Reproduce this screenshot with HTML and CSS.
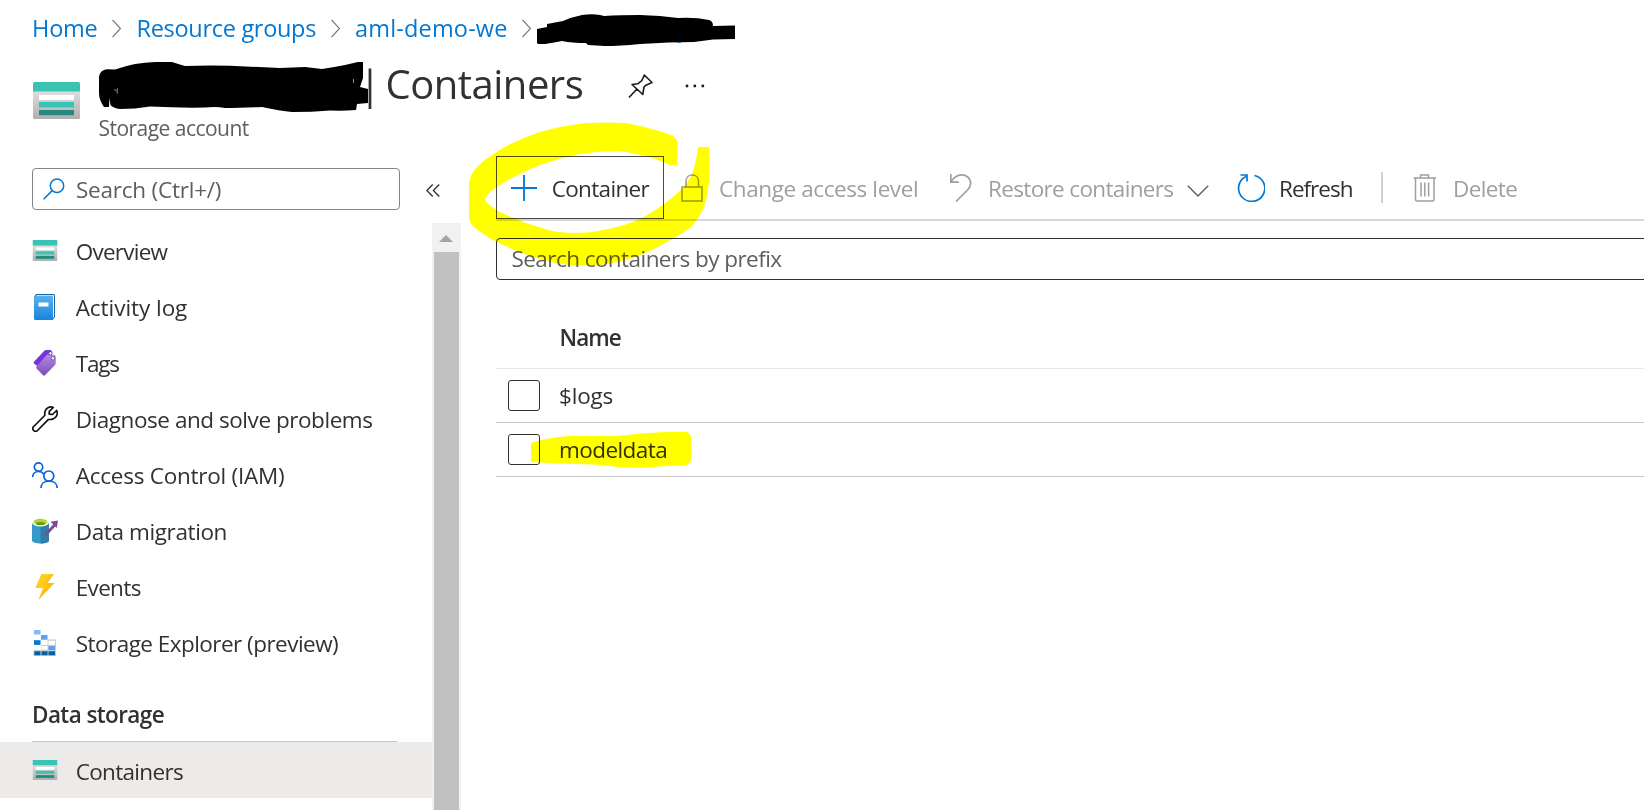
FILE: index.html
```html
<!DOCTYPE html>
<html lang="en">
<head>
<meta charset="utf-8">
<title>Containers</title>
<link rel="stylesheet" href="styles.css">
</head>
<body>
<svg class="defs" width="0" height="0" aria-hidden="true">
  <defs>
    <linearGradient id="grey" x1="0" y1="0" x2="0" y2="1"><stop offset="0" stop-color="#e6e6e6"/><stop offset="1" stop-color="#b0b0b0"/></linearGradient>
    <linearGradient id="blue" x1="0" y1="0" x2="0" y2="1"><stop offset="0" stop-color="#5ab0ef"/><stop offset="1" stop-color="#1785db"/></linearGradient>
    <linearGradient id="violet" x1="0" y1="0" x2="0" y2="1"><stop offset="0" stop-color="#b98ae6"/><stop offset="1" stop-color="#7a4bb8"/></linearGradient>
    <linearGradient id="bolt" x1="0" y1="0" x2="1" y2="1"><stop offset="0" stop-color="#fdd21a"/><stop offset="1" stop-color="#fbb010"/></linearGradient>
  </defs>
  <symbol id="storage" viewBox="0 0 47 37" preserveAspectRatio="none">
    <rect y="4" width="47" height="33" rx="1.5" fill="url(#grey)"/>
    <path d="M0 9.500V1.500Q0 0 1.500 0H45.500Q47 0 47 1.500V9.500Z" fill="#39c3b3"/>
    <rect x="6" y="13" width="35" height="5" fill="#fff"/>
    <rect x="6" y="20" width="35" height="5.500" fill="#39c3b3"/>
    <rect x="6" y="28" width="35" height="5.200" fill="#27897e"/>
  </symbol>
</svg>

<header class="header">
  <nav class="crumbs">
    <a class="t-home">Home</a>
    <svg width="9" height="19" viewBox="0 0 9 19"><path d="M.5 .8 8.500 9.500.5 18.200" fill="none" stroke="#767676" stroke-width="1.200"/></svg>
    <a class="t-groups">Resource groups</a>
    <svg width="9" height="19" viewBox="0 0 9 19"><path d="M.5 .8 8.500 9.500.5 18.200" fill="none" stroke="#767676" stroke-width="1.200"/></svg>
    <a class="t-aml">aml-demo-we</a>
    <svg width="9" height="19" viewBox="0 0 9 19"><path d="M.5 .8 8.500 9.500.5 18.200" fill="none" stroke="#767676" stroke-width="1.200"/></svg>
  </nav>
  <div class="titlebar">
    <svg class="logo" width="47" height="37"><use href="#storage"/></svg>
    <div>
      <div class="title-row">
        <h1><span class="bar">|</span>Containers</h1>
        <svg class="pin" width="26" height="26" viewBox="0 0 26 26" fill="none" stroke="#1b1a19" stroke-width="1.600" stroke-linejoin="round"><path d="M1 24.500 8.700 16.200M16.300 2 24 9.500 17.800 12.300 16 14 14.800 21.500 4 11.500 10 10.700 13.900 7.500Z"/></svg>
        <svg class="dots" width="20" height="4" viewBox="0 0 20 4" fill="#1b1a19"><circle cx="2" cy="2" r="1.450"/><circle cx="9.800" cy="2" r="1.450"/><circle cx="17.800" cy="2" r="1.450"/></svg>
      </div>
      <div class="subtitle">Storage account</div>
    </div>
  </div>
</header>

<div class="page">
  <aside class="side">
    <div class="side-top">
      <div class="search">
        <svg width="22" height="22" viewBox="0 0 22 22" fill="none" stroke="#0078d4" stroke-width="1.500"><circle cx="14" cy="7.800" r="6.700"/><path d="M9.200 12.600.6 21.200"/></svg>
        <span class="t-search">Search (Ctrl+/)</span>
      </div>
      <svg class="collapse" width="14" height="13" viewBox="0 0 14 13" fill="none" stroke="#323130" stroke-width="1.300"><path d="M6.700.5.9 6.500 6.700 12.500M13.200.5 7.400 6.500 13.200 12.500"/></svg>
    </div>
    <div class="side-body">
      <div class="menu">
        <div class="item"><svg width="26" height="26" viewBox="0 0 26 26"><use href="#storage" x=".5" y="2" width="25" height="21"/></svg><span class="t-overview">Overview</span></div>
        <div class="item"><svg width="26" height="26" viewBox="0 0 26 26"><path d="M4 0H21.500Q23 0 23 1.500V23L20.500 26H5L2 3Z" fill="#1767a8"/><path d="M4.500 1.200H22V23L20.500 24V3H3.500Z" fill="#fff"/><path d="M2 2.800Q2 2 3 2H20.500Q21 2 21 2.800V25Q21 26 20 26H3.500Q2 26 2 24.500Z" fill="url(#blue)"/><rect x="6.500" y="8.500" width="10" height="4" fill="#fff"/></svg><span class="t-activity">Activity log</span></div>
        <div class="item"><svg width="26" height="26" viewBox="0 0 26 26"><path d="M12.500 .5Q13 0 14 0H18.500Q20 .3 20 2V7L6 16.500 2 13.500Q1.300 12.500 2 11.700Z" fill="#7435dc"/><path d="M15 4.800Q15.500 4.300 16.500 4.300L22.300 5Q23.800 5.300 23.800 6.700L23.700 13.500Q23.500 14.300 23 15L13 25.300Q12 26.200 11 25.300L4.500 18.500Q3.700 17.500 4.500 16.500Z" fill="url(#violet)"/><circle cx="18.400" cy="3.300" r="1.700" fill="#fff" stroke="#472089" stroke-width=".8"/><circle cx="21" cy="8.300" r="1.700" fill="#fff" stroke="#6b3ab0" stroke-width=".8"/></svg><span class="t-tags">Tags</span></div>
        <div class="item"><svg width="26" height="26" viewBox="0 0 26 26" fill="none" stroke="#111" stroke-width="1.700" stroke-linejoin="round"><path d="M21.300 1.500C17.500-.2 13.500 2.200 12.900 5.800 12.700 7.300 12.900 8.700 12.700 9.500L1.700 20.500C-.9 23.300 2.800 27 5.500 24.500L16.200 13.600C17.300 13.300 19 13.800 20.700 13.100 24.500 11.900 26.300 7.800 24.600 4.500L20.500 8.500 17.200 8.200 17.300 5.400Z"/></svg><span class="t-diagnose">Diagnose and solve problems</span></div>
        <div class="item"><svg width="26" height="26" viewBox="0 0 26 26" fill="none" stroke="#0f62dc" stroke-width="1.700"><circle cx="6.500" cy="5" r="4.200"/><circle cx="16.800" cy="14" r="5"/><path d="M.7 15C.7 11.500 3.500 9.500 6.500 9.500 8.700 9.500 10.800 10.500 11.800 12.300M9 26C9 21.500 12.500 19 17 19 21.500 19 25.200 21.500 25.200 26"/></svg><span class="t-access">Access Control (IAM)</span></div>
        <div class="item"><svg width="26" height="26" viewBox="0 0 26 26"><path d="M0 4V22.500C0 26.500 17 26.500 17 22.500V4Z" fill="#3999c6"/><path d="M8.500 4V25.500C13 25.500 17 24.500 17 22.500V4Z" fill="#2f7ea8"/><ellipse cx="8.500" cy="4.500" rx="8.500" ry="4" fill="#fff"/><ellipse cx="8.500" cy="4" rx="7" ry="3.200" fill="#b4d331"/><ellipse cx="8.500" cy="5.500" rx="4.500" ry="1.600" fill="#5ea00b"/><path d="M14 16.500 23 6.500" stroke="#804998" stroke-width="2.800"/><path d="M18.500 3.800 26 2.500 24.800 10Z" fill="#804998"/></svg><span class="t-migration">Data migration</span></div>
        <div class="item"><svg width="26" height="26" viewBox="0 0 26 26"><path d="M9.500 0H22L15.500 9H22.500L6.500 26 11 14H3.500Z" fill="url(#bolt)"/><path d="M9.500 0H18L10.500 11H15L6.500 26 11 14H3.500Z" fill="#fdd31c" opacity=".65"/></svg><span class="t-events">Events</span></div>
        <div class="item"><svg width="26" height="26" viewBox="0 0 26 26"><path d="M15.500 9.500H24V26H1.500V20H9V15H15.500Z" fill="#c8cdd2"/><rect x="2" y="0" width="6.500" height="4.500" fill="#83b9f9"/><rect x="9" y="5" width="6.500" height="4.700" fill="#5ea0ef"/><rect x="2" y="10.200" width="6.500" height="4.700" fill="#0078d4"/><path d="M9.500 10.500H15.200V15H9.500ZM16.500 10.800H23V14.700H16.500ZM2.500 16H8.500V19.800H2.500ZM9.500 16H15.500V19.800H9.500Z" fill="#fff"/><rect x="16.500" y="16" width="6.500" height="4" fill="#5ea0ef"/><path d="M2.300 21.200H8.500V25.200H2.300ZM9.500 21.200H15.600V25.200H9.500ZM16.500 21.200H23V25.200H16.500Z" fill="#0560a6"/></svg><span class="t-explorer">Storage Explorer (preview)</span></div>
        <h2 class="group"><span class="t-data">Data storage</span></h2>
        <div class="item selected"><svg width="26" height="26" viewBox="0 0 26 26"><use href="#storage" x=".5" y="3" width="25" height="20"/></svg><span class="t-containers">Containers</span></div>
      </div>
      <div class="scroll">
        <svg width="14" height="7" viewBox="0 0 14 7"><path d="M7 0 14 7H0Z" fill="#a3a3a3"/></svg>
        <div class="thumb"></div>
      </div>
    </div>
  </aside>

  <main class="main">
    <div class="toolbar">
      <div class="button">
        <svg width="26" height="26" viewBox="0 0 26 26" stroke="#0078d4" stroke-width="1.800"><path d="M13 0V26M0 13H26"/></svg>
        <span class="t-container">Container</span>
      </div>
      <svg class="lock" width="22" height="28" viewBox="0 0 22 28" fill="none" stroke="#a19f9d" stroke-width="1.600"><rect x="1" y="13" width="20" height="14"/><path d="M5 13V7C5 -1 17.500 -1 17.500 7V13"/></svg>
      <span class="label muted t-change">Change access level</span>
      <svg width="22" height="28" viewBox="0 0 22 28" fill="none" stroke="#a19f9d" stroke-width="1.700"><path d="M.8 0V8.200H8.800M1 8C4 3 7.500 .9 11.500 .9 19.500 .9 23.500 9.500 18 15.500L6 27.500"/></svg>
      <span class="label muted t-restore">Restore containers</span>
      <svg class="chevron" width="22" height="12" viewBox="0 0 22 12" fill="none" stroke="#605e5c" stroke-width="1.400"><path d="M.8.700 11 11 21.200.700"/></svg>
      <svg width="28" height="28" viewBox="0 0 28 28" fill="none" stroke="#0078d4" stroke-width="1.700"><path d="M9 2.500A13.100 13.100 0 1 0 17.500 1.500M3.500 1H10V7.500" /></svg>
      <span class="label t-refresh">Refresh</span>
      <span class="divider"></span>
      <svg width="24" height="28" viewBox="0 0 24 28" fill="none" stroke="#a19f9d" stroke-width="1.500"><path d="M.5 4H23M7.500 4V1H15.500V4M2.500 4V25.500Q2.500 27 4 27H19.500Q21 27 21 25.500V4M8 8.500V22.500M11.800 8.500V22.500M15.600 8.500V22.500"/></svg>
      <span class="label muted t-delete">Delete</span>
    </div>
    <div class="filter"><span class="t-filter">Search containers by prefix</span></div>
    <div class="table">
      <div class="row head"><span class="t-name">Name</span></div>
      <div class="row"><i class="box"></i><span class="t-logs">$logs</span></div>
      <div class="row"><i class="box"></i><span class="t-model">modeldata</span></div>
    </div>
  </main>
</div>

<!-- Highlighter strokes -->
<svg class="marks highlight" width="1644" height="810" viewBox="0 0 1644 810" fill="#ff0">
  <path d="M677 165V142Q677 138 671 135 655 129 627 123 606 122 586 123 560 126 540 132 515 140 495 153 485 159 478 166 469 175 469 185V218Q470 224 474 227 485 236 495 241 515 251 530 256 550 263 570 265H600Q620 262 635 257 652 251 667 242 680 235 690 228 698 220 704 207 708 195 709 183V147H698Q697 156 694 168 692 177 684 187 665 206 640 219 625 226 603 230 590 233 575 233 557 233 545 229 520 222 498 211 486 203 485 200 486 193 505 182 520 173 540 165 560 158 580 154 600 151 620 151 640 154 655 159 664 162 670 165Z"/>
  <path d="M531 443Q545 438 568 436H617Q640 433 665 432H686Q691 433 691 438V460Q690 465 684 465.500 665 465.500 640 468 620 468 600 465 587 464 570 464L531 462Z"/>
</svg>
<!-- Redaction strokes -->
<svg class="marks" width="1644" height="810" viewBox="0 0 1644 810">
  <path d="M537 29 547 27V24L563 21Q572 17 582 15 592 13.500 600 15L604 16Q620 15 640 15L660 16 678 18Q695 17 709 20 713 21 713 26L735 25.500V39L713 39.500 694 42Q670 42 640 44 620 46 605 46L588 45 586 43Q572 43 562 41 552 43 545 44H538L537 43Z"/>
  <path d="M99 77Q100 70 107 69.300L115 69.500Q125 66 135 64 145 62.500 155 62H172Q178 64 185 66 205 65 230 65.700L280 68 305 67 322 69Q335 67 345 65L358 62H363V78L360 87 368 89V103L357 104 356 110Q343 111 330 110.500 312 112 292 112 280 111 262 107 240 108 225 108 217 106.500 205 107.500 180 108 150 106.500 135 109 120 109 113 108 110.500 105L109.500 98 109 107H104Q99 100 99 93Z"/>
  <path d="M113 89H117V93Z" fill="#41454b"/><path d="M117 88H118V94H117Z" fill="#246eb5"/><path d="M353 79H354V83H353Z" fill="#888"/>
  <path d="M677 42.300H681" stroke="#0b5a9c"/>
</svg>
</body>
</html>
```
FILE: styles.css
```css
* { box-sizing: border-box; }
body {
  margin: 0;
  width: 1644px;
  height: 810px;
  overflow: hidden;
  position: relative;
  background: #fff;
  color: #323130;
  font: 22.5px/32px "Open Sans", "Noto Sans", sans-serif;
  white-space: nowrap;
}
svg { display: block; flex: none; }
h1, h2 { margin: 0; font: inherit; }
.defs { position: absolute; }

/* Header */
.header { height: 168px; }
.crumbs {
  display: grid;
  grid-template-columns: 80px 24.500px 194.500px 24px 167px 9px;
  align-items: center;
  height: 56px;
  padding-left: 32px;
  font-size: 23.500px;
  color: #0078d4;
}
.titlebar { display: flex; padding-left: 33px; }
.logo { margin: 26px 0 0; }
.title-row { display: flex; align-items: center; height: 60px; margin-top: -4px; }
h1 { width: 548px; padding: 4px 0 0 279px; font-size: 40px; line-height: 54px; letter-spacing: -.5px; }
.bar { display: inline-block; width: 26.500px; }
.pin { margin-top: 8px; }
.dots { margin: 7px 0 0 31px; }
.subtitle { padding-left: 18.500px; font-size: 21px; letter-spacing: -.53px; color: #605e5c; }

/* Columns */
.page { display: flex; height: 642px; }
.side { width: 461px; flex: none; }
.side-top { display: flex; align-items: center; height: 42px; padding-left: 32px; }
.search {
  display: flex;
  align-items: center;
  width: 368px;
  height: 42px;
  padding-left: 10px;
  border: 1px solid #858585;
  border-radius: 4px;
  color: #605e5c;
}
.search span { margin: 1px 0 0 11px; }
.collapse { margin-left: 26px; margin-top: 2px; }
.side-body { display: flex; height: 587px; margin-top: 13px; }
.menu { width: 432px; }
.item { display: flex; align-items: center; height: 56px; padding-left: 32px; }
.item span { margin: 2px 0 0 17.700px; }
.selected { background: #edebe9; }
.selected span { margin-top: 4px; }
.group {
  height: 71px;
  width: 365px;
  margin-left: 32px;
  padding-top: 28px;
  border-bottom: 1px solid #c8c6c4;
  font-weight: 600;
}
.scroll { width: 29px; padding: 12px 2px 0; background: #f1f1f1; }
.scroll svg { margin: 0 auto 10px 5px; }
.thumb { width: 25px; height: 560px; background: #c1c1c1; }

/* Content */
.main { width: 1148px; margin: -12px 0 0 35px; flex: none; overflow: hidden; }
.toolbar {
  display: grid;
  grid-template-columns: 168px 55px 231px 38px 199px 50px 42px 102px 32px 40px 99px;
  align-items: center;
  height: 65px;
  border-bottom: 2px solid #d6d6d6;
}
.button {
  display: flex;
  align-items: center;
  height: 63px;
  padding-left: 14px;
  border: 1px solid #4d4b49;
}
.button span { margin: 2px 0 0 14.700px; }
.label { margin-top: 2px; }
.lock { margin-left: 17px; }
.chevron { margin-top: 6px; }
.muted { color: #a19f9d; }
.divider { width: 2px; height: 31px; background: #d0d0d0; }
.filter {
  width: 1200px;
  height: 42px;
  margin-top: 17px;
  padding: 4px 0 0 14.500px;
  border: 1px solid #323130;
  border-radius: 4px;
  color: #605e5c;
}
.table { margin-top: 36px; }
.row { display: flex; align-items: center; height: 54px; padding-left: 12px; border-bottom: 1px solid #c8c8c8; }
.row span { margin: 1px 0 0 19px; }
.head { height: 53px; padding: 0 0 10px 32px; border-color: #e8e8e8; font-weight: 600; }
.head span { margin: 2px 0 0 31.500px; }
.box { width: 32px; height: 31px; margin-top: -1px; border: 1px solid #323130; border-radius: 3px; }

/* Pen strokes over the page */
.marks { position: absolute; left: 0; top: 0; pointer-events: none; }
.highlight { mix-blend-mode: multiply; }

/* Tracking */
.t-home { letter-spacing: -.2px; }
.t-groups { letter-spacing: -.3px; }
.t-aml { letter-spacing: .17px; }
.t-search { letter-spacing: -.22px; }
.t-overview { letter-spacing: -.75px; }
.t-activity { letter-spacing: -.05px; }
.t-tags { letter-spacing: -1.200px; }
.t-diagnose { letter-spacing: -.45px; }
.t-access { letter-spacing: -.24px; }
.t-migration { letter-spacing: -.38px; }
.t-events { letter-spacing: -.65px; }
.t-explorer { letter-spacing: -.53px; }
.t-data { letter-spacing: -.59px; }
.t-containers { letter-spacing: -.68px; }
.t-container { letter-spacing: -.66px; }
.t-change { letter-spacing: -.4px; }
.t-restore { letter-spacing: -.65px; }
.t-refresh { letter-spacing: -1px; }
.t-delete { letter-spacing: -.6px; }
.t-filter { letter-spacing: -.56px; }
.t-name { letter-spacing: -.97px; }
.t-logs { letter-spacing: -.2px; }
.t-model { letter-spacing: -.57px; }
```
